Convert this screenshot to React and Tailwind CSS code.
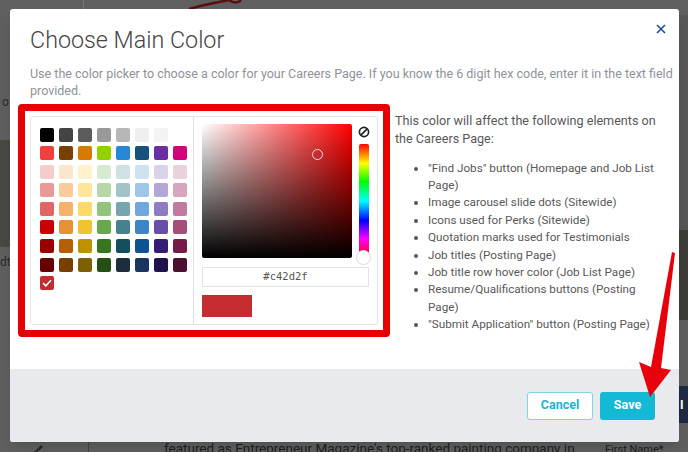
import React from "react";

const swatches = [
    ["#000000", "#434343", "#5c5c5c", "#999999", "#b7b7b7", "#efefef", "#f3f3f3", "#ffffff"],
    ["#ef3f3f", "#7a4000", "#d47b00", "#93d000", "#2687d4", "#17527f", "#6c2fa2", "#d4007a"],
    ["#f4cccc", "#fce5cd", "#fff2cc", "#d9ead3", "#d0e0e3", "#cfe2f3", "#d9d2e9", "#ead1dc"],
    ["#ea9999", "#f9cb9c", "#ffe599", "#b6d7a8", "#a2c4c9", "#9fc5e8", "#b4a7d6", "#d5a6bd"],
    ["#e06666", "#f6b26b", "#ffd966", "#93c47d", "#76a5af", "#6fa8dc", "#8e7cc3", "#c27ba0"],
    ["#cc0000", "#e69138", "#f1c232", "#6aa84f", "#45818e", "#3d85c6", "#674ea7", "#a64d79"],
    ["#990000", "#b45f06", "#bf9000", "#38761d", "#134f5c", "#0b5394", "#351c75", "#741b47"],
    ["#660000", "#783f04", "#7f6000", "#274e13", "#1c2e3d", "#1a3560", "#20124d", "#4c1130"],
];

const affected = [
    "\"Find Jobs\" button (Homepage and Job List Page)",
    "Image carousel slide dots (Sitewide)",
    "Icons used for Perks (Sitewide)",
    "Quotation marks used for Testimonials",
    "Job titles (Posting Page)",
    "Job title row hover color (Job List Page)",
    "Resume/Qualifications buttons (Posting Page)",
    "\"Submit Application\" button (Posting Page)",
];

const ColorPicker = () => {
    return (
        <div className="flex w-[348px] h-[209px] bg-white border border-[#e3e3e3] rounded-[3px]">
            {/* preset swatches */}
            <div className="w-[163px] border-r border-[#e3e3e3] pl-[9px] pt-[11px]">
                <div className="grid grid-cols-8 gap-x-[4.5px] gap-y-[4.6px] w-[147px]">
                    {swatches.flat().map((c, i) => (
                        <div
                            key={i}
                            className="w-[14px] h-[14px] rounded-[2px]"
                            style={{ backgroundColor: c }}
                        />
                    ))}
                    <div className="w-[14px] h-[14px] rounded-[2px] bg-[#c42d2f] flex items-center justify-center">
                        <svg width="10" height="8" viewBox="0 0 10 8">
                            <path d="M1 4.2 L3.8 6.8 L9 1.2" fill="none" stroke="#fff" strokeWidth="1.6" />
                        </svg>
                    </div>
                </div>
            </div>

            {/* saturation / hue picker */}
            <div className="flex flex-col pl-[8px] pt-[7px]">
                <div className="flex">
                    <div className="relative w-[150px] h-[134px] rounded-[2px] bg-[linear-gradient(to_top,#000,transparent),linear-gradient(to_right,#fff,#f00)]">
                        <div className="absolute left-[110px] top-[25px] w-[11px] h-[11px] rounded-full border border-[#f3dada]" />
                    </div>
                    <div className="ml-[7px] w-[10px] flex flex-col items-center">
                        <svg width="12" height="12" viewBox="0 0 12 12" className="mt-[2px]">
                            <circle cx="6" cy="6" r="4.6" fill="none" stroke="#222" strokeWidth="1.7" />
                            <line x1="2.8" y1="9.2" x2="9.2" y2="2.8" stroke="#222" strokeWidth="1.7" />
                        </svg>
                        <div className="relative mt-[6px] w-[10px] h-[114px] rounded-[2px] bg-[linear-gradient(to_bottom,#f00,#ff0_17%,#0f0_33%,#0ff_50%,#00f_67%,#f0f_83%,#f00)]">
                            <div className="absolute left-[-3px] bottom-[-7px] w-[15px] h-[15px] rounded-full bg-white border border-[#d8d8d8]" />
                        </div>
                    </div>
                </div>
                <div className="mt-[9px] w-[167px] h-[20px] border border-[#e3e3e3] flex items-center justify-center text-[10.5px] text-[#555] font-['DejaVu_Sans_Mono',monospace]">
                    #c42d2f
                </div>
                <div className="mt-[8px] w-[50px] h-[22px] bg-[#c42d2f]" />
            </div>
        </div>
    );
};

const App = () => {
    return (
        <div className="relative w-[688px] h-[452px] overflow-hidden bg-[#5f5f5f] pt-[9px] pl-[10px] font-['Roboto',sans-serif]">
            {/* page behind the overlay */}
            <div className="absolute left-[83px] top-0 w-px h-[9px] bg-[#777]" />
            <svg className="absolute left-[185px] top-0" width="60" height="10" viewBox="0 0 60 10">
                <path d="M4 9 C20 4 40 1 44 0" fill="none" stroke="#5a0f10" strokeWidth="2.5" />
                <path d="M44 0 C48 3 52 4 56 0" fill="none" stroke="#5a0f10" strokeWidth="2.5" />
            </svg>
            <div className="absolute left-0 top-[140px] w-[12px] h-[107px] bg-[#4a4843]" />
            <div className="absolute left-[2px] top-[93px] text-[12px] text-[#2a2a2a]">o</div>
            <div className="absolute left-0 top-[253px] text-[12px] text-[#2a2a2a]">dt</div>
            <div className="absolute right-0 top-[15px] w-[12px] h-[215px] bg-[#575757]" />
            <div className="absolute right-0 top-[230px] w-[12px] h-[90px] bg-[#3f3d38]" />
            <div className="absolute left-[676px] top-[386px] w-[12px] h-[37px] bg-[#1f2a44] text-white text-[12px] font-bold flex items-center pl-[4px] overflow-hidden">I</div>
            <div className="absolute left-[88px] top-[442px] w-px h-[10px] bg-[#444]" />
            <svg className="absolute left-[32px] top-[443px]" width="12" height="10" viewBox="0 0 12 10">
                <path d="M2 9 L9 2 L11 4 L4 10 Z" fill="#2a2a2a" />
            </svg>
            <div className="absolute left-[164px] top-[440px] text-[13.5px] leading-[16px] text-[#1e1e1e] whitespace-nowrap">featured as Entrepreneur Magazine's top-ranked painting company in</div>
            <div className="absolute left-[605px] top-[443px] text-[11px] leading-[13px] text-[#1e1e1e] whitespace-nowrap">First Name*</div>

            {/* modal */}
            <div className="relative z-10 w-[669px] h-[433px] bg-white rounded-[3px] shadow-lg flex flex-col overflow-hidden">
                <div className="relative pl-[20px] pr-[2px] pt-[17px]">
                    <h2 className="text-[23.3px] leading-[28px] font-light text-[#454545]">Choose Main Color</h2>
                    <button className="absolute right-[13px] top-[15px] w-[10px] h-[10px]">
                        <svg width="10" height="10" viewBox="0 0 10 10">
                            <path d="M1 1 L9 9 M9 1 L1 9" stroke="#1e4f8f" strokeWidth="1.6" />
                        </svg>
                    </button>
                    <p className="mt-[11px] text-[12.5px] leading-[17px] text-[#8e939a]">
                        Use the color picker to choose a color for your Careers Page. If you know the 6 digit hex code, enter it in the text field provided.
                    </p>
                </div>

                <div className="flex items-start mt-[4.5px] pl-[8px]">
                    <div className="w-[372px] h-[233px] border-[7px] border-[#e60000] rounded-[4px] p-[5px]">
                        <ColorPicker />
                    </div>
                    <div className="ml-[5px] w-[270px] pt-[8px] text-[#585858]">
                        <p className="text-[12.6px] leading-[18px]">This color will affect the following elements on the Careers Page:</p>
                        <ul className="mt-[12px] pl-[33px] list-disc text-[11.7px] leading-[17.4px]">
                            {affected.map((t) => (
                                <li key={t}>{t}</li>
                            ))}
                        </ul>
                    </div>
                </div>

                <div className="mt-auto h-[73px] bg-[#e9eaee] flex items-center justify-end gap-[7px] pr-[24px]">
                    <button className="w-[66px] h-[28px] rounded-[3px] border border-[#7fd4e5] bg-white text-[12.5px] font-bold text-[#1ab4d4]">Cancel</button>
                    <button className="w-[55px] h-[28px] rounded-[3px] bg-[#14b9d5] text-[12.5px] font-bold text-white">Save</button>
                </div>
            </div>

            {/* annotation arrow */}
            <svg className="absolute inset-0 z-20 pointer-events-none" width="688" height="452" viewBox="0 0 688 452">
                <polygon points="672,252 675,253 661,368 671,370 650,397 639,362 651,367" fill="#e8000b" />
            </svg>
        </div>
    );
};

export default App;
